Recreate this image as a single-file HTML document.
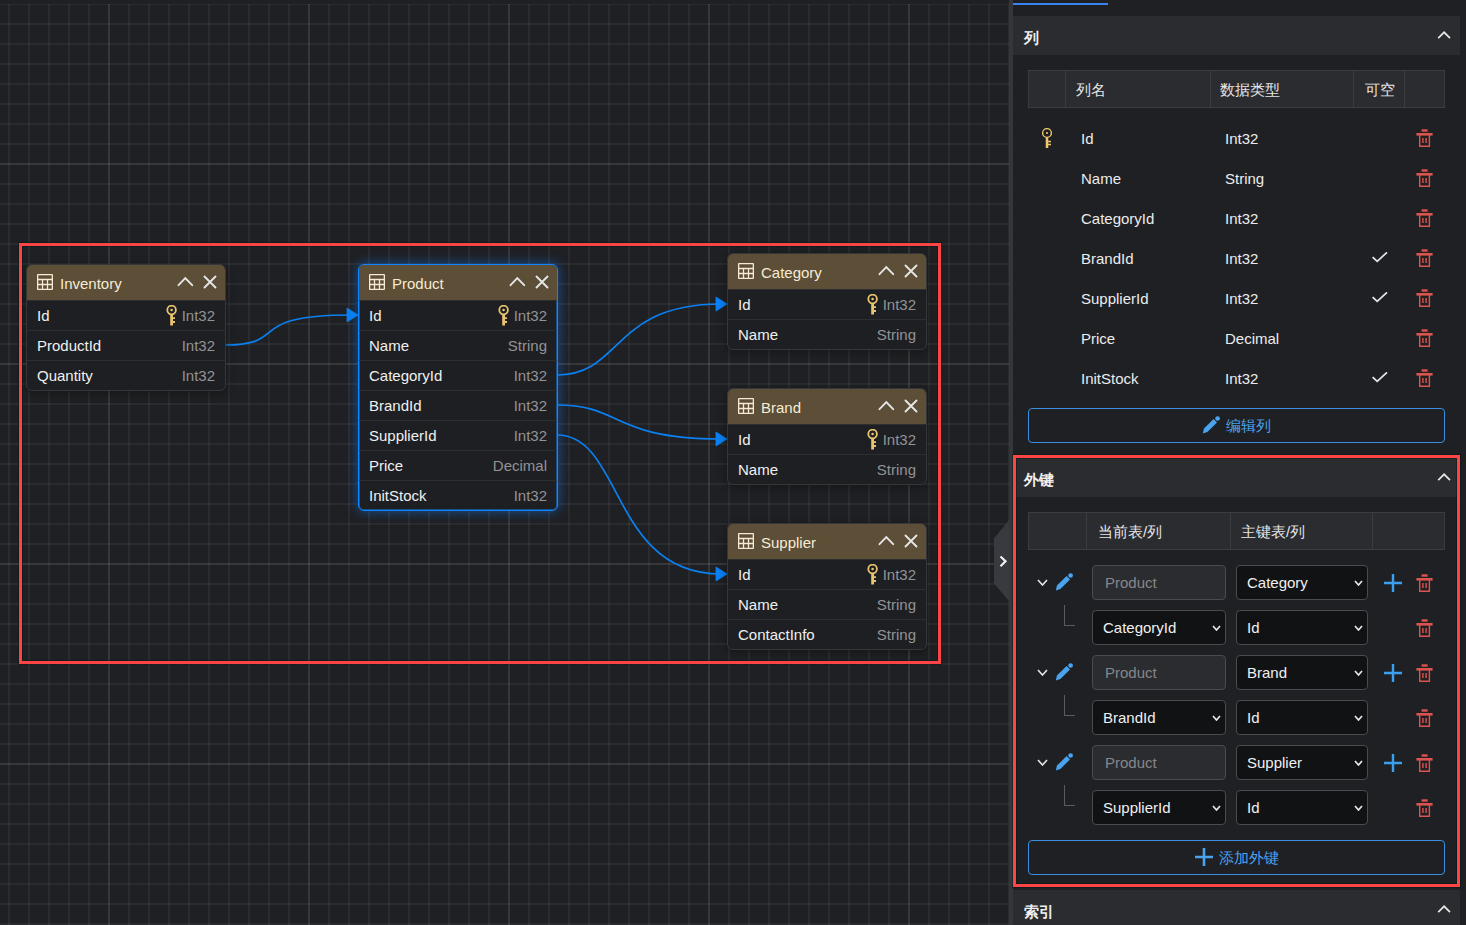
<!DOCTYPE html>
<html><head><meta charset="utf-8">
<style>
*{box-sizing:border-box;margin:0;padding:0}
html,body{width:1466px;height:925px;overflow:hidden;background:#1f2023;font-family:"Liberation Sans",sans-serif;color:#e8e8e8}
.abs{position:absolute}
#canvas{position:absolute;left:0;top:0;width:1009px;height:925px;background-color:#1f2023;overflow:hidden}
#grid{position:absolute;left:0;top:4px;width:1009px;height:921px;
background-image:
linear-gradient(90deg,rgba(255,255,255,.055) 2px,transparent 2px),
linear-gradient(180deg,rgba(255,255,255,.055) 2px,transparent 2px),
linear-gradient(90deg,rgba(255,255,255,.05) 2px,transparent 2px),
linear-gradient(180deg,rgba(255,255,255,.05) 2px,transparent 2px);
background-size:200px 100%,100% 200px,20px 100%,100% 20px;
background-position:108px 0,0 159px,8px 0,0 -1px;}
.node{position:absolute;width:200px;background:#1e1f22;border:1px solid #36373b;border-radius:6px;box-shadow:0 2px 8px rgba(0,0,0,.35)}
.node.sel{border:1px solid #0f86ff;box-shadow:inset 0 0 0 0.5px #0f86ff,0 0 12px 1px rgba(15,120,240,.5)}
.nh{height:35px;background:#5c4e37;border-radius:5px 5px 0 0;position:relative}
.nh .ti{position:absolute;left:10px;top:9px}
.nh .tt{position:absolute;left:33px;top:10px;font-size:15px;color:#f7ebd3;line-height:18px}
.nh .up{position:absolute;left:150px;top:11px}
.nh .cl{position:absolute;left:176px;top:10px}
.nr{height:30px;position:relative;border-top:1px solid #2d2e32}
.nr:first-of-type{border-top:none}
.nr .n{position:absolute;left:10px;top:6px;font-size:15px;color:#f0f0f0;line-height:18px}
.nr .t{position:absolute;right:10px;top:6px;font-size:15px;color:#929396;line-height:18px}
.nr .k{position:absolute;right:47px;top:4px}
#sep{position:absolute;left:1009px;top:0;width:4px;height:925px;background:#35363a}
#panel{position:absolute;left:1013px;top:0;width:453px;height:925px;background:#1f2023}
.sh{width:447px;height:39px;background:#2b2c30}
.shT{font-size:15px;font-weight:bold;color:#f0f0f0;line-height:18px;white-space:nowrap}
.th{background:#2b2c30;border:1px solid #3b3c40}
.hd{font-size:15px;color:#e6e6e6;line-height:18px;white-space:nowrap}
.pt{font-size:15px;color:#ececec;line-height:18px;white-space:nowrap}
.btn{border:1px solid #3a8ee0;border-radius:4px}
.bt{font-size:15px;color:#4aa3ef;line-height:18px;white-space:nowrap}
.inp{width:134px;height:35px;border:1px solid #4a4b4f;border-radius:4px}
.inp span{position:absolute;left:12px;top:8px;font-size:15px;line-height:18px;white-space:nowrap}
.ro{background:#2b2c30}.ro span{color:#86878b}
.sl{background:#111214}.sl span{color:#f0f0f0;left:10px}
.rbox{position:absolute;border:3px solid #fe4545;box-shadow:0 0 0 1px rgba(0,18,18,.4),inset 0 0 0 1px rgba(0,18,18,.4)}
</style></head><body>
<div id="canvas"><div id="grid"></div>
<!--EDGES--><svg class="abs" style="left:0;top:0" width="1009" height="925"><path d="M225,345 C291,345 242,315 352,315" fill="none" stroke="#0a80f2" stroke-width="1.7"/><path d="M347,308 L358,315 L347,322 Z" fill="#0a80f2" stroke="#0a80f2" stroke-width="0.8" stroke-linejoin="round"/><path d="M557,375 C623,375 611,304 721,304" fill="none" stroke="#0a80f2" stroke-width="1.7"/><path d="M716,297 L727,304 L716,311 Z" fill="#0a80f2" stroke="#0a80f2" stroke-width="0.8" stroke-linejoin="round"/><path d="M557,405 C623,405 611,439 721,439" fill="none" stroke="#0a80f2" stroke-width="1.7"/><path d="M716,432 L727,439 L716,446 Z" fill="#0a80f2" stroke="#0a80f2" stroke-width="0.8" stroke-linejoin="round"/><path d="M557,435 C623,435 611,574 721,574" fill="none" stroke="#0a80f2" stroke-width="1.7"/><path d="M716,567 L727,574 L716,581 Z" fill="#0a80f2" stroke="#0a80f2" stroke-width="0.8" stroke-linejoin="round"/></svg><!--/EDGES-->
<div class="node" style="left:26px;top:264px"><div class="nh"><svg class="ti" width="16" height="16" viewBox="0 0 16 16" fill="none" stroke="#f7ebd3" stroke-width="1.3"><rect x="0.65" y="0.65" width="14.7" height="14.7" rx="0.4"/><path d="M0.65 5.5H15.35M0.65 10.5H15.35M5.5 5.5V15.35M10.5 5.5V15.35"/></svg><span class="tt">Inventory</span><svg class="up" width="17" height="11" viewBox="0 0 17 11" fill="none" stroke="#e6e6e6" stroke-width="1.9" stroke-linecap="round"><path d="M1.5 9.2L8.3 2.2L15.2 9.2"/></svg><svg class="cl" width="14" height="14" viewBox="0 0 14 14" fill="none" stroke="#e6e6e6" stroke-width="1.9" stroke-linecap="round"><path d="M1.5 1.5L12.5 12.5M12.5 1.5L1.5 12.5"/></svg></div><div class="nr f"><span class="n">Id</span><svg class="k" width="12" height="21" viewBox="0 0 12 21" fill="none"><circle cx="5.6" cy="5" r="4.3" stroke="#e9c46f" stroke-width="1.8"/><circle cx="5.6" cy="5" r="1.3" fill="#e9c46f"/><path d="M5.6 9V20.5" stroke="#e9c46f" stroke-width="2.8"/><path d="M6 13.1H9M6 17H9" stroke="#e9c46f" stroke-width="1.9"/></svg><span class="t">Int32</span></div><div class="nr"><span class="n">ProductId</span><span class="t">Int32</span></div><div class="nr"><span class="n">Quantity</span><span class="t">Int32</span></div></div>
<div class="node sel" style="left:358px;top:264px"><div class="nh"><svg class="ti" width="16" height="16" viewBox="0 0 16 16" fill="none" stroke="#f7ebd3" stroke-width="1.3"><rect x="0.65" y="0.65" width="14.7" height="14.7" rx="0.4"/><path d="M0.65 5.5H15.35M0.65 10.5H15.35M5.5 5.5V15.35M10.5 5.5V15.35"/></svg><span class="tt">Product</span><svg class="up" width="17" height="11" viewBox="0 0 17 11" fill="none" stroke="#e6e6e6" stroke-width="1.9" stroke-linecap="round"><path d="M1.5 9.2L8.3 2.2L15.2 9.2"/></svg><svg class="cl" width="14" height="14" viewBox="0 0 14 14" fill="none" stroke="#e6e6e6" stroke-width="1.9" stroke-linecap="round"><path d="M1.5 1.5L12.5 12.5M12.5 1.5L1.5 12.5"/></svg></div><div class="nr f"><span class="n">Id</span><svg class="k" width="12" height="21" viewBox="0 0 12 21" fill="none"><circle cx="5.6" cy="5" r="4.3" stroke="#e9c46f" stroke-width="1.8"/><circle cx="5.6" cy="5" r="1.3" fill="#e9c46f"/><path d="M5.6 9V20.5" stroke="#e9c46f" stroke-width="2.8"/><path d="M6 13.1H9M6 17H9" stroke="#e9c46f" stroke-width="1.9"/></svg><span class="t">Int32</span></div><div class="nr"><span class="n">Name</span><span class="t">String</span></div><div class="nr"><span class="n">CategoryId</span><span class="t">Int32</span></div><div class="nr"><span class="n">BrandId</span><span class="t">Int32</span></div><div class="nr"><span class="n">SupplierId</span><span class="t">Int32</span></div><div class="nr"><span class="n">Price</span><span class="t">Decimal</span></div><div class="nr"><span class="n">InitStock</span><span class="t">Int32</span></div></div>
<div class="node" style="left:727px;top:253px"><div class="nh"><svg class="ti" width="16" height="16" viewBox="0 0 16 16" fill="none" stroke="#f7ebd3" stroke-width="1.3"><rect x="0.65" y="0.65" width="14.7" height="14.7" rx="0.4"/><path d="M0.65 5.5H15.35M0.65 10.5H15.35M5.5 5.5V15.35M10.5 5.5V15.35"/></svg><span class="tt">Category</span><svg class="up" width="17" height="11" viewBox="0 0 17 11" fill="none" stroke="#e6e6e6" stroke-width="1.9" stroke-linecap="round"><path d="M1.5 9.2L8.3 2.2L15.2 9.2"/></svg><svg class="cl" width="14" height="14" viewBox="0 0 14 14" fill="none" stroke="#e6e6e6" stroke-width="1.9" stroke-linecap="round"><path d="M1.5 1.5L12.5 12.5M12.5 1.5L1.5 12.5"/></svg></div><div class="nr f"><span class="n">Id</span><svg class="k" width="12" height="21" viewBox="0 0 12 21" fill="none"><circle cx="5.6" cy="5" r="4.3" stroke="#e9c46f" stroke-width="1.8"/><circle cx="5.6" cy="5" r="1.3" fill="#e9c46f"/><path d="M5.6 9V20.5" stroke="#e9c46f" stroke-width="2.8"/><path d="M6 13.1H9M6 17H9" stroke="#e9c46f" stroke-width="1.9"/></svg><span class="t">Int32</span></div><div class="nr"><span class="n">Name</span><span class="t">String</span></div></div>
<div class="node" style="left:727px;top:388px"><div class="nh"><svg class="ti" width="16" height="16" viewBox="0 0 16 16" fill="none" stroke="#f7ebd3" stroke-width="1.3"><rect x="0.65" y="0.65" width="14.7" height="14.7" rx="0.4"/><path d="M0.65 5.5H15.35M0.65 10.5H15.35M5.5 5.5V15.35M10.5 5.5V15.35"/></svg><span class="tt">Brand</span><svg class="up" width="17" height="11" viewBox="0 0 17 11" fill="none" stroke="#e6e6e6" stroke-width="1.9" stroke-linecap="round"><path d="M1.5 9.2L8.3 2.2L15.2 9.2"/></svg><svg class="cl" width="14" height="14" viewBox="0 0 14 14" fill="none" stroke="#e6e6e6" stroke-width="1.9" stroke-linecap="round"><path d="M1.5 1.5L12.5 12.5M12.5 1.5L1.5 12.5"/></svg></div><div class="nr f"><span class="n">Id</span><svg class="k" width="12" height="21" viewBox="0 0 12 21" fill="none"><circle cx="5.6" cy="5" r="4.3" stroke="#e9c46f" stroke-width="1.8"/><circle cx="5.6" cy="5" r="1.3" fill="#e9c46f"/><path d="M5.6 9V20.5" stroke="#e9c46f" stroke-width="2.8"/><path d="M6 13.1H9M6 17H9" stroke="#e9c46f" stroke-width="1.9"/></svg><span class="t">Int32</span></div><div class="nr"><span class="n">Name</span><span class="t">String</span></div></div>
<div class="node" style="left:727px;top:523px"><div class="nh"><svg class="ti" width="16" height="16" viewBox="0 0 16 16" fill="none" stroke="#f7ebd3" stroke-width="1.3"><rect x="0.65" y="0.65" width="14.7" height="14.7" rx="0.4"/><path d="M0.65 5.5H15.35M0.65 10.5H15.35M5.5 5.5V15.35M10.5 5.5V15.35"/></svg><span class="tt">Supplier</span><svg class="up" width="17" height="11" viewBox="0 0 17 11" fill="none" stroke="#e6e6e6" stroke-width="1.9" stroke-linecap="round"><path d="M1.5 9.2L8.3 2.2L15.2 9.2"/></svg><svg class="cl" width="14" height="14" viewBox="0 0 14 14" fill="none" stroke="#e6e6e6" stroke-width="1.9" stroke-linecap="round"><path d="M1.5 1.5L12.5 12.5M12.5 1.5L1.5 12.5"/></svg></div><div class="nr f"><span class="n">Id</span><svg class="k" width="12" height="21" viewBox="0 0 12 21" fill="none"><circle cx="5.6" cy="5" r="4.3" stroke="#e9c46f" stroke-width="1.8"/><circle cx="5.6" cy="5" r="1.3" fill="#e9c46f"/><path d="M5.6 9V20.5" stroke="#e9c46f" stroke-width="2.8"/><path d="M6 13.1H9M6 17H9" stroke="#e9c46f" stroke-width="1.9"/></svg><span class="t">Int32</span></div><div class="nr"><span class="n">Name</span><span class="t">String</span></div><div class="nr"><span class="n">ContactInfo</span><span class="t">String</span></div></div>
</div>
<div id="sep"></div>
<svg class="abs" style="left:990px;top:515px" width="23" height="92" viewBox="0 0 23 92"><path d="M19 5L4 23.6V68.5L19 86Z" fill="#393a3f"/><path d="M10.5 41.5L15.5 46.3L10.5 51.2" fill="none" stroke="#f2f2f2" stroke-width="2.2"/></svg>
<div id="panel"></div>
<!--PANEL--><div class="abs" style="left:1013px;top:3px;width:95px;height:2px;background:#3a82f2"></div>
<div class="abs sh" style="left:1013px;top:16px"></div>
<span class="abs shT" style="left:1024px;top:29px;">列</span>
<svg class="abs" style="left:1437px;top:30px" width="15" height="10" viewBox="0 0 15 10" fill="none" stroke="#e6e6e6" stroke-width="1.7"><path d="M1.2 8.2L7.1 2.3L13 8.2"/></svg>
<div class="abs th" style="left:1028px;top:70px;width:417px;height:38px"></div>
<div class="abs" style="left:1065px;top:71px;width:1px;height:36px;background:#3b3c40"></div>
<div class="abs" style="left:1210px;top:71px;width:1px;height:36px;background:#3b3c40"></div>
<div class="abs" style="left:1353px;top:71px;width:1px;height:36px;background:#3b3c40"></div>
<div class="abs" style="left:1404px;top:71px;width:1px;height:36px;background:#3b3c40"></div>
<span class="abs hd" style="left:1076px;top:81px;">列名</span>
<span class="abs hd" style="left:1220px;top:81px;">数据类型</span>
<span class="abs hd" style="left:1365px;top:81px;">可空</span>
<span class="abs pt" style="left:1081px;top:130px;">Id</span>
<span class="abs pt" style="left:1225px;top:130px;">Int32</span>
<svg class="abs" style="left:1041px;top:128px" width="12" height="21" viewBox="0 0 12 21" fill="none"><circle cx="6" cy="5" r="4.4" stroke="#f0c66c" stroke-width="1.4"/><circle cx="6" cy="5" r="1.1" fill="#f0c66c"/><path d="M6 9.2V20" stroke="#f0c66c" stroke-width="2.5"/><path d="M6.5 13.5H10M6.5 16.5H10" stroke="#f0c66c" stroke-width="1.4"/></svg>
<svg class="abs" style="left:1416px;top:129px" width="18" height="19" viewBox="0 0 18 19" fill="none" stroke="#dc5350"><path d="M5.6 1.5H11.6" stroke-width="2.4"/><path d="M0.4 5.3H16.6" stroke-width="2.6"/><path d="M3.7 6V17.3H13.4V6" stroke-width="1.4"/><path d="M6.9 9V14M10.1 9V14" stroke-width="1.4"/></svg>
<span class="abs pt" style="left:1081px;top:170px;">Name</span>
<span class="abs pt" style="left:1225px;top:170px;">String</span>
<svg class="abs" style="left:1416px;top:169px" width="18" height="19" viewBox="0 0 18 19" fill="none" stroke="#dc5350"><path d="M5.6 1.5H11.6" stroke-width="2.4"/><path d="M0.4 5.3H16.6" stroke-width="2.6"/><path d="M3.7 6V17.3H13.4V6" stroke-width="1.4"/><path d="M6.9 9V14M10.1 9V14" stroke-width="1.4"/></svg>
<span class="abs pt" style="left:1081px;top:210px;">CategoryId</span>
<span class="abs pt" style="left:1225px;top:210px;">Int32</span>
<svg class="abs" style="left:1416px;top:209px" width="18" height="19" viewBox="0 0 18 19" fill="none" stroke="#dc5350"><path d="M5.6 1.5H11.6" stroke-width="2.4"/><path d="M0.4 5.3H16.6" stroke-width="2.6"/><path d="M3.7 6V17.3H13.4V6" stroke-width="1.4"/><path d="M6.9 9V14M10.1 9V14" stroke-width="1.4"/></svg>
<span class="abs pt" style="left:1081px;top:250px;">BrandId</span>
<span class="abs pt" style="left:1225px;top:250px;">Int32</span>
<svg class="abs" style="left:1372px;top:252px" width="16" height="11" viewBox="0 0 16 11" fill="none" stroke="#e6e6e6" stroke-width="1.7" stroke-linecap="square"><path d="M1.2 5.6L5.2 9.4L14.4 0.9"/></svg>
<svg class="abs" style="left:1416px;top:249px" width="18" height="19" viewBox="0 0 18 19" fill="none" stroke="#dc5350"><path d="M5.6 1.5H11.6" stroke-width="2.4"/><path d="M0.4 5.3H16.6" stroke-width="2.6"/><path d="M3.7 6V17.3H13.4V6" stroke-width="1.4"/><path d="M6.9 9V14M10.1 9V14" stroke-width="1.4"/></svg>
<span class="abs pt" style="left:1081px;top:290px;">SupplierId</span>
<span class="abs pt" style="left:1225px;top:290px;">Int32</span>
<svg class="abs" style="left:1372px;top:292px" width="16" height="11" viewBox="0 0 16 11" fill="none" stroke="#e6e6e6" stroke-width="1.7" stroke-linecap="square"><path d="M1.2 5.6L5.2 9.4L14.4 0.9"/></svg>
<svg class="abs" style="left:1416px;top:289px" width="18" height="19" viewBox="0 0 18 19" fill="none" stroke="#dc5350"><path d="M5.6 1.5H11.6" stroke-width="2.4"/><path d="M0.4 5.3H16.6" stroke-width="2.6"/><path d="M3.7 6V17.3H13.4V6" stroke-width="1.4"/><path d="M6.9 9V14M10.1 9V14" stroke-width="1.4"/></svg>
<span class="abs pt" style="left:1081px;top:330px;">Price</span>
<span class="abs pt" style="left:1225px;top:330px;">Decimal</span>
<svg class="abs" style="left:1416px;top:329px" width="18" height="19" viewBox="0 0 18 19" fill="none" stroke="#dc5350"><path d="M5.6 1.5H11.6" stroke-width="2.4"/><path d="M0.4 5.3H16.6" stroke-width="2.6"/><path d="M3.7 6V17.3H13.4V6" stroke-width="1.4"/><path d="M6.9 9V14M10.1 9V14" stroke-width="1.4"/></svg>
<span class="abs pt" style="left:1081px;top:370px;">InitStock</span>
<span class="abs pt" style="left:1225px;top:370px;">Int32</span>
<svg class="abs" style="left:1372px;top:372px" width="16" height="11" viewBox="0 0 16 11" fill="none" stroke="#e6e6e6" stroke-width="1.7" stroke-linecap="square"><path d="M1.2 5.6L5.2 9.4L14.4 0.9"/></svg>
<svg class="abs" style="left:1416px;top:369px" width="18" height="19" viewBox="0 0 18 19" fill="none" stroke="#dc5350"><path d="M5.6 1.5H11.6" stroke-width="2.4"/><path d="M0.4 5.3H16.6" stroke-width="2.6"/><path d="M3.7 6V17.3H13.4V6" stroke-width="1.4"/><path d="M6.9 9V14M10.1 9V14" stroke-width="1.4"/></svg>
<div class="abs btn" style="left:1028px;top:408px;width:417px;height:35px"></div>
<svg class="abs" style="left:1202px;top:416px" width="19" height="19" viewBox="0 0 19 19"><path d="M0.8 17.6L2.0 12.6L11.6 3.0L15.0 6.4L5.4 16.0Z" fill="#4aa3ef"/><circle cx="15.6" cy="2.5" r="2.35" fill="#4aa3ef"/></svg>
<span class="abs bt" style="left:1226px;top:417px;">编辑列</span>
<div class="abs sh" style="left:1013px;top:458px"></div>
<span class="abs shT" style="left:1024px;top:471px;">外键</span>
<svg class="abs" style="left:1437px;top:472px" width="15" height="10" viewBox="0 0 15 10" fill="none" stroke="#e6e6e6" stroke-width="1.7"><path d="M1.2 8.2L7.1 2.3L13 8.2"/></svg>
<div class="abs th" style="left:1028px;top:512px;width:417px;height:38px"></div>
<div class="abs" style="left:1086px;top:513px;width:1px;height:36px;background:#3b3c40"></div>
<div class="abs" style="left:1230px;top:513px;width:1px;height:36px;background:#3b3c40"></div>
<div class="abs" style="left:1372px;top:513px;width:1px;height:36px;background:#3b3c40"></div>
<span class="abs hd" style="left:1098px;top:523px;">当前表/列</span>
<span class="abs hd" style="left:1241px;top:523px;">主键表/列</span>
<svg class="abs" style="left:1037px;top:579px" width="11" height="7" viewBox="0 0 11 7" fill="none" stroke="#e6e6e6" stroke-width="1.6"><path d="M1 1L5.5 6L10 1"/></svg>
<svg class="abs" style="left:1055px;top:573px" width="19" height="19" viewBox="0 0 19 19"><path d="M0.8 17.6L2.0 12.6L11.6 3.0L15.0 6.4L5.4 16.0Z" fill="#4aa3ef"/><circle cx="15.6" cy="2.5" r="2.35" fill="#4aa3ef"/></svg>
<div class="abs inp ro" style="left:1092px;top:565px"><span>Product</span></div>
<div class="abs inp sl" style="width:132px;left:1236px;top:565px"><span>Category</span></div>
<svg class="abs" style="left:1354px;top:580px" width="9" height="6" viewBox="0 0 9 6" fill="none" stroke="#e6e6e6" stroke-width="1.7"><path d="M1 1L4.5 5L8 1"/></svg>
<svg class="abs" style="left:1384px;top:574px" width="18" height="18" viewBox="0 0 18 18" fill="none" stroke="#3b9ff0" stroke-width="2.4"><path d="M9.0 0V18M0 9.0H18"/></svg>
<svg class="abs" style="left:1416px;top:574px" width="18" height="19" viewBox="0 0 18 19" fill="none" stroke="#dc5350"><path d="M5.6 1.5H11.6" stroke-width="2.4"/><path d="M0.4 5.3H16.6" stroke-width="2.6"/><path d="M3.7 6V17.3H13.4V6" stroke-width="1.4"/><path d="M6.9 9V14M10.1 9V14" stroke-width="1.4"/></svg>
<div class="abs" style="left:1064px;top:605px;width:1px;height:21px;background:#5a5b5f"></div>
<div class="abs" style="left:1064px;top:625px;width:11px;height:1px;background:#5a5b5f"></div>
<div class="abs inp sl" style="left:1092px;top:610px"><span>CategoryId</span></div>
<svg class="abs" style="left:1212px;top:625px" width="9" height="6" viewBox="0 0 9 6" fill="none" stroke="#e6e6e6" stroke-width="1.7"><path d="M1 1L4.5 5L8 1"/></svg>
<div class="abs inp sl" style="width:132px;left:1236px;top:610px"><span>Id</span></div>
<svg class="abs" style="left:1354px;top:625px" width="9" height="6" viewBox="0 0 9 6" fill="none" stroke="#e6e6e6" stroke-width="1.7"><path d="M1 1L4.5 5L8 1"/></svg>
<svg class="abs" style="left:1416px;top:619px" width="18" height="19" viewBox="0 0 18 19" fill="none" stroke="#dc5350"><path d="M5.6 1.5H11.6" stroke-width="2.4"/><path d="M0.4 5.3H16.6" stroke-width="2.6"/><path d="M3.7 6V17.3H13.4V6" stroke-width="1.4"/><path d="M6.9 9V14M10.1 9V14" stroke-width="1.4"/></svg>
<svg class="abs" style="left:1037px;top:669px" width="11" height="7" viewBox="0 0 11 7" fill="none" stroke="#e6e6e6" stroke-width="1.6"><path d="M1 1L5.5 6L10 1"/></svg>
<svg class="abs" style="left:1055px;top:663px" width="19" height="19" viewBox="0 0 19 19"><path d="M0.8 17.6L2.0 12.6L11.6 3.0L15.0 6.4L5.4 16.0Z" fill="#4aa3ef"/><circle cx="15.6" cy="2.5" r="2.35" fill="#4aa3ef"/></svg>
<div class="abs inp ro" style="left:1092px;top:655px"><span>Product</span></div>
<div class="abs inp sl" style="width:132px;left:1236px;top:655px"><span>Brand</span></div>
<svg class="abs" style="left:1354px;top:670px" width="9" height="6" viewBox="0 0 9 6" fill="none" stroke="#e6e6e6" stroke-width="1.7"><path d="M1 1L4.5 5L8 1"/></svg>
<svg class="abs" style="left:1384px;top:664px" width="18" height="18" viewBox="0 0 18 18" fill="none" stroke="#3b9ff0" stroke-width="2.4"><path d="M9.0 0V18M0 9.0H18"/></svg>
<svg class="abs" style="left:1416px;top:664px" width="18" height="19" viewBox="0 0 18 19" fill="none" stroke="#dc5350"><path d="M5.6 1.5H11.6" stroke-width="2.4"/><path d="M0.4 5.3H16.6" stroke-width="2.6"/><path d="M3.7 6V17.3H13.4V6" stroke-width="1.4"/><path d="M6.9 9V14M10.1 9V14" stroke-width="1.4"/></svg>
<div class="abs" style="left:1064px;top:695px;width:1px;height:21px;background:#5a5b5f"></div>
<div class="abs" style="left:1064px;top:715px;width:11px;height:1px;background:#5a5b5f"></div>
<div class="abs inp sl" style="left:1092px;top:700px"><span>BrandId</span></div>
<svg class="abs" style="left:1212px;top:715px" width="9" height="6" viewBox="0 0 9 6" fill="none" stroke="#e6e6e6" stroke-width="1.7"><path d="M1 1L4.5 5L8 1"/></svg>
<div class="abs inp sl" style="width:132px;left:1236px;top:700px"><span>Id</span></div>
<svg class="abs" style="left:1354px;top:715px" width="9" height="6" viewBox="0 0 9 6" fill="none" stroke="#e6e6e6" stroke-width="1.7"><path d="M1 1L4.5 5L8 1"/></svg>
<svg class="abs" style="left:1416px;top:709px" width="18" height="19" viewBox="0 0 18 19" fill="none" stroke="#dc5350"><path d="M5.6 1.5H11.6" stroke-width="2.4"/><path d="M0.4 5.3H16.6" stroke-width="2.6"/><path d="M3.7 6V17.3H13.4V6" stroke-width="1.4"/><path d="M6.9 9V14M10.1 9V14" stroke-width="1.4"/></svg>
<svg class="abs" style="left:1037px;top:759px" width="11" height="7" viewBox="0 0 11 7" fill="none" stroke="#e6e6e6" stroke-width="1.6"><path d="M1 1L5.5 6L10 1"/></svg>
<svg class="abs" style="left:1055px;top:753px" width="19" height="19" viewBox="0 0 19 19"><path d="M0.8 17.6L2.0 12.6L11.6 3.0L15.0 6.4L5.4 16.0Z" fill="#4aa3ef"/><circle cx="15.6" cy="2.5" r="2.35" fill="#4aa3ef"/></svg>
<div class="abs inp ro" style="left:1092px;top:745px"><span>Product</span></div>
<div class="abs inp sl" style="width:132px;left:1236px;top:745px"><span>Supplier</span></div>
<svg class="abs" style="left:1354px;top:760px" width="9" height="6" viewBox="0 0 9 6" fill="none" stroke="#e6e6e6" stroke-width="1.7"><path d="M1 1L4.5 5L8 1"/></svg>
<svg class="abs" style="left:1384px;top:754px" width="18" height="18" viewBox="0 0 18 18" fill="none" stroke="#3b9ff0" stroke-width="2.4"><path d="M9.0 0V18M0 9.0H18"/></svg>
<svg class="abs" style="left:1416px;top:754px" width="18" height="19" viewBox="0 0 18 19" fill="none" stroke="#dc5350"><path d="M5.6 1.5H11.6" stroke-width="2.4"/><path d="M0.4 5.3H16.6" stroke-width="2.6"/><path d="M3.7 6V17.3H13.4V6" stroke-width="1.4"/><path d="M6.9 9V14M10.1 9V14" stroke-width="1.4"/></svg>
<div class="abs" style="left:1064px;top:785px;width:1px;height:21px;background:#5a5b5f"></div>
<div class="abs" style="left:1064px;top:805px;width:11px;height:1px;background:#5a5b5f"></div>
<div class="abs inp sl" style="left:1092px;top:790px"><span>SupplierId</span></div>
<svg class="abs" style="left:1212px;top:805px" width="9" height="6" viewBox="0 0 9 6" fill="none" stroke="#e6e6e6" stroke-width="1.7"><path d="M1 1L4.5 5L8 1"/></svg>
<div class="abs inp sl" style="width:132px;left:1236px;top:790px"><span>Id</span></div>
<svg class="abs" style="left:1354px;top:805px" width="9" height="6" viewBox="0 0 9 6" fill="none" stroke="#e6e6e6" stroke-width="1.7"><path d="M1 1L4.5 5L8 1"/></svg>
<svg class="abs" style="left:1416px;top:799px" width="18" height="19" viewBox="0 0 18 19" fill="none" stroke="#dc5350"><path d="M5.6 1.5H11.6" stroke-width="2.4"/><path d="M0.4 5.3H16.6" stroke-width="2.6"/><path d="M3.7 6V17.3H13.4V6" stroke-width="1.4"/><path d="M6.9 9V14M10.1 9V14" stroke-width="1.4"/></svg>
<div class="abs btn" style="left:1028px;top:840px;width:417px;height:35px"></div>
<svg class="abs" style="left:1195px;top:848px" width="18" height="18" viewBox="0 0 18 18" fill="none" stroke="#4aa3ef" stroke-width="2.6"><path d="M9.0 0V18M0 9.0H18"/></svg>
<span class="abs bt" style="left:1219px;top:849px;">添加外键</span>
<div class="abs sh" style="left:1013px;top:890px"></div>
<span class="abs shT" style="left:1024px;top:903px;">索引</span>
<svg class="abs" style="left:1437px;top:904px" width="15" height="10" viewBox="0 0 15 10" fill="none" stroke="#e6e6e6" stroke-width="1.7"><path d="M1.2 8.2L7.1 2.3L13 8.2"/></svg><!--/PANEL-->
<div class="rbox" style="left:19px;top:243px;width:922px;height:421px"></div>
<div class="rbox" style="left:1013px;top:455px;width:447px;height:432px"></div>
</body></html>
